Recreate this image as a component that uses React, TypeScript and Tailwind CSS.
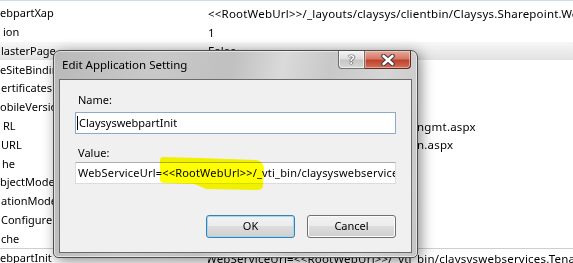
import React from 'react';

type Row = {
  name: string;
  nameOffset?: string;
  value?: string;
  hidden?: string;
  tail?: string;
  selected?: boolean;
  last?: boolean;
};

const rows: Row[] = [
  { name: 'ebpartXap', value: '<<RootWebUrl>>/_layouts/claysys/clientbin/Claysys.Sharepoint.WebpartXap.xap' },
  { name: 'ion', nameOffset: 'pl-[3px]', value: '1' },
  { name: 'lasterPage', nameOffset: 'pl-[1px]', value: 'False', selected: true },
  { name: 'eSiteBinding' },
  { name: 'ertificates', nameOffset: 'pl-[1px]' },
  { name: 'obileVersion' },
  { name: 'RL', nameOffset: 'pl-[3px]', hidden: '<<RootWebUrl>>/_layouts/claysys/licensema', tail: 'ngmt.aspx' },
  { name: 'URL', nameOffset: 'pl-[1px]', hidden: '<<RootWebUrl>>/_layouts/claysys/registratio', tail: 'n.aspx' },
  { name: 'he', nameOffset: 'pl-[2px]' },
  { name: 'bjectModel' },
  { name: 'ationMode', nameOffset: 'pl-[1px]' },
  { name: 'Configure', nameOffset: 'pl-[1px]' },
  { name: 'che', nameOffset: 'pl-[1px]' },
  {
    name: 'ebpartInit',
    hidden: 'WebServiceUrl=<<RootWebUrl>>/_vti_',
    tail: 'bin/claysyswebservices.TenantService.svc',
    last: true,
  },
];

const SettingsList = () => (
  <div className="flex flex-col">
    <div className="h-px bg-[#c6def2]" />
    <div className="h-[3px]" />
    {rows.map((row) => (
      <div
        key={row.name}
        className={
          'flex h-[18.8px] shrink-0 items-center whitespace-nowrap ' +
          (row.selected ? 'bg-[linear-gradient(#f7f7f7,#e2e2e2)] ' : '') +
          (row.last ? 'border-t border-[#cfcfcf] ' : '')
        }
      >
        <div className={'w-[202px] shrink-0 overflow-hidden ' + (row.nameOffset ?? '')}>{row.name}</div>
        <div className="flex min-w-0 flex-1 overflow-hidden pl-[6px] text-[11.5px] tracking-[0.2px]">
          {row.value && <span>{row.value}</span>}
          {row.tail && (
            <>
              <span className="flex w-[209px] shrink-0 justify-end overflow-hidden">
                <span>{row.hidden}</span>
              </span>
              <span>{row.tail}</span>
            </>
          )}
        </div>
      </div>
    ))}
  </div>
);

const HelpButton = () => (
  <div className="flex h-[18px] w-[27px] items-center justify-center rounded-bl-[4px] border border-t-0 border-[#6f6f6f] bg-[linear-gradient(#f4f4f4_0%,#dedede_45%,#c6c6c6_55%,#d8d8d8_100%)] shadow-[inset_0_0_0_1px_rgba(255,255,255,0.6)]">
    <span className="text-[13px] font-bold leading-none text-white [text-shadow:0_0_1px_#222,0_0_1px_#222,0_0_1px_#222]">?</span>
  </div>
);

const CloseButton = () => (
  <div className="flex h-[18px] w-[46px] items-center justify-center rounded-br-[4px] border border-t-0 border-l-0 border-[#5c2b22] bg-[linear-gradient(#e9a99b_0%,#d47a68_45%,#c0412c_55%,#d2705a_100%)] shadow-[inset_0_0_0_1px_rgba(255,220,210,0.5)]">
    <svg width="16" height="12" viewBox="0 0 16 12">
      <path d="M3.5 2 L12.5 10 M12.5 2 L3.5 10" stroke="#3b3b3b" strokeWidth="4.6" strokeLinecap="round" />
      <path d="M3.5 2 L12.5 10 M12.5 2 L3.5 10" stroke="#ffffff" strokeWidth="2.6" strokeLinecap="round" />
    </svg>
  </div>
);

const EditDialog = () => (
  <div className="absolute left-[53px] top-[50px] flex h-[208px] w-[365px] flex-col rounded-t-[7px] rounded-b-[5px] border border-[#4d4d4d] bg-[linear-gradient(100deg,#b9b9b9_0%,#c9c9c9_25%,#c0c0c0_45%,#dadada_58%,#c8c8c8_70%,#d6d6d6_84%,#c4c4c4_100%)] shadow-[3px_3px_14px_rgba(0,0,0,0.45),inset_0_0_0_1px_rgba(255,255,255,0.55)]">
    <div className="flex h-[28px] shrink-0 items-start pl-[8px] pr-[6px]">
      <span className="mt-[6px] flex-1 text-[11.5px] leading-[16px] text-black">Edit Application Setting</span>
      <div className="flex">
        <HelpButton />
        <CloseButton />
      </div>
    </div>
    <div className="mx-[5px] mb-[4px] flex flex-1 flex-col border border-[#6b6b6b] bg-[#f0f0f0] px-[15px] pt-[12px]">
      <div className="pl-[3px] leading-[16px]">Name:</div>
      <div className="mt-[4px] flex h-[22px] items-center border border-[#8eaacb] bg-white pl-[1px]">
        <span className="h-[14px] w-px bg-black" />
        <span className="pl-[1px]">ClaysyswebpartInit</span>
      </div>
      <div className="mt-[11px] pl-[3px] leading-[16px]">Value:</div>
      <div className="mt-[1px] flex h-[22px] items-center overflow-hidden whitespace-nowrap border border-[#dadce1] border-t-[#abadb3] bg-white pl-[2px] tracking-[0.2px]">
        WebServiceUrl=&lt;&lt;RootWebUrl&gt;&gt;/_vti_bin/claysyswebservices.TenantService.svc
      </div>
      <div className="mt-[31px] flex justify-end gap-[12px]">
        <button className="flex h-[23px] w-[89px] items-center justify-center rounded-[3px] border border-[#3c7fb1] bg-[linear-gradient(#f2f2f2_0%,#ebebeb_50%,#dddddd_50%,#cfcfcf_100%)] shadow-[inset_0_0_0_1px_#9fd9f5]">
          OK
        </button>
        <button className="flex h-[23px] w-[89px] items-center justify-center rounded-[3px] border border-[#707070] bg-[linear-gradient(#f2f2f2_0%,#ebebeb_50%,#dddddd_50%,#cfcfcf_100%)] shadow-[inset_0_0_0_1px_#fcfcfc]">
          Cancel
        </button>
      </div>
    </div>
  </div>
);

export default function App() {
  return (
    <div className="relative h-[263px] w-[573px] overflow-hidden bg-white font-['Noto_Sans',sans-serif] text-[11px] text-black">
      <SettingsList />
      <EditDialog />
      {/* highlighter mark over the value box */}
      <svg className="pointer-events-none absolute left-0 top-0 mix-blend-multiply" width="573" height="263">
        <path
          d="M163 157 L200 158 L256 160 Q263 161 264 168 L263 187 Q262 190 256 190 L206 189 Q200 186 194 184 L164 183 Q160 183 160 179 L160 161 Q160 157 163 157 Z"
          fill="#ffff00"
        />
      </svg>
    </div>
  );
}
